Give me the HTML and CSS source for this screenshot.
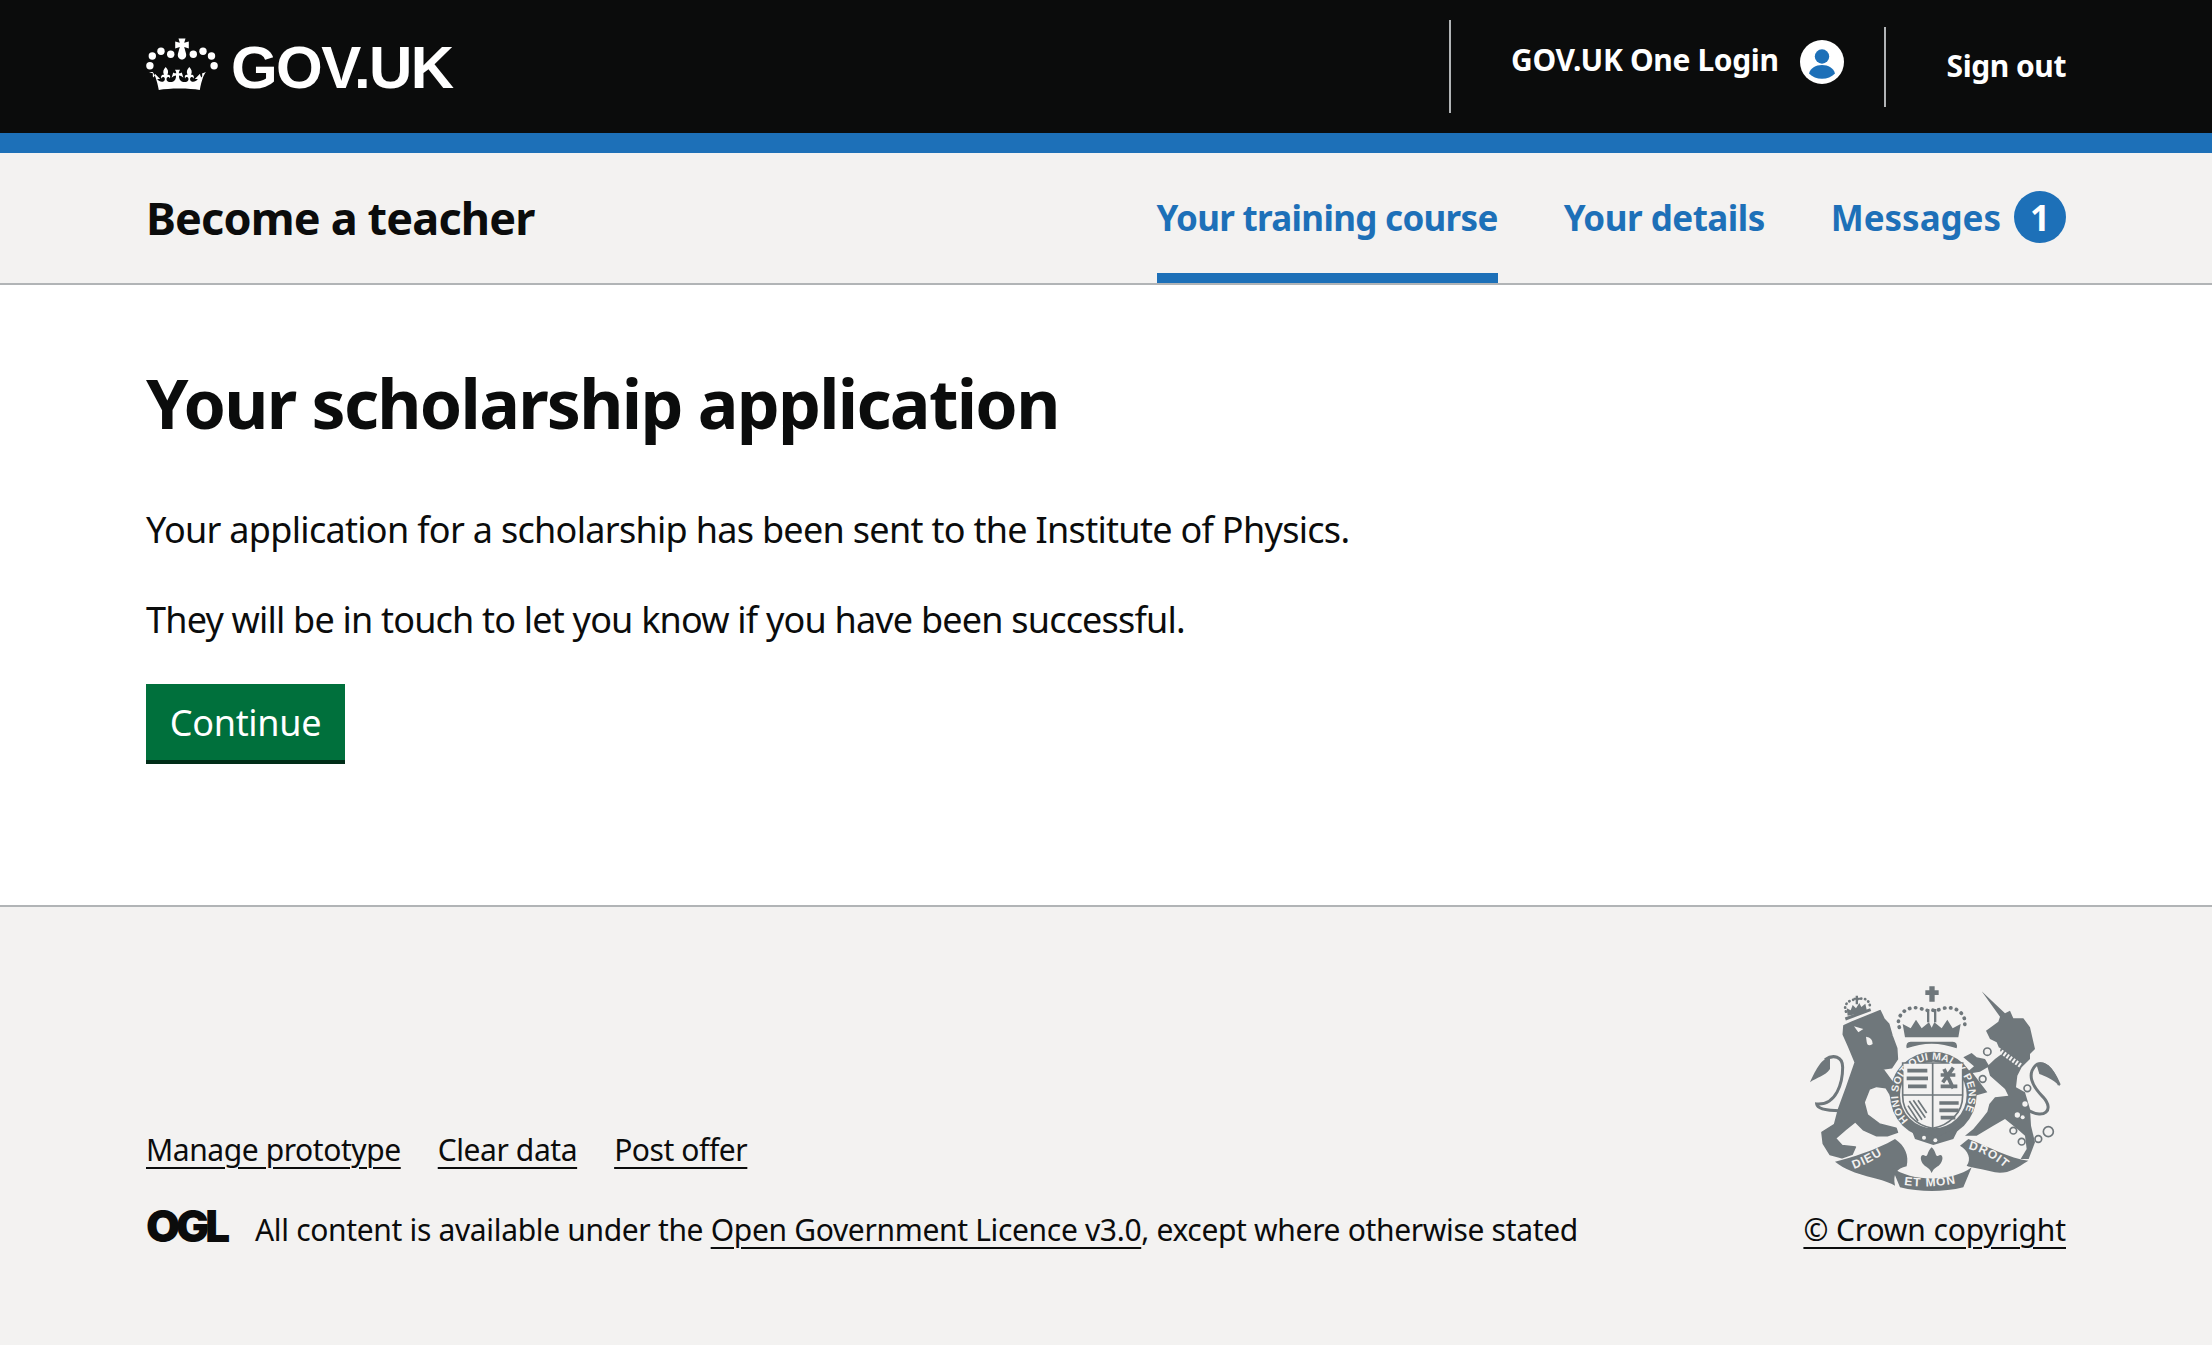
FILE: index.html
```html
<!DOCTYPE html>
<html lang="en">
<head>
<meta charset="utf-8">
<title>Your scholarship application</title>
<link rel="stylesheet" href="styles.css">
</head>
<body>
<header class="top">
  <div class="wrap top-row">
    <a class="brand" href="#">
      <svg class="crown" viewBox="0 0 72 54" aria-hidden="true">
        <g fill="#fff">
          <circle cx="3.900" cy="27.800" r="3.700"/><circle cx="6.300" cy="18" r="3.700"/><circle cx="15" cy="13.200" r="3.700"/><circle cx="24.700" cy="16.300" r="3.700"/>
          <circle cx="47.300" cy="16.300" r="3.700"/><circle cx="57" cy="13.200" r="3.700"/><circle cx="65.500" cy="18" r="3.700"/><circle cx="68.100" cy="27.800" r="3.700"/>
          <path d="M32.500 0.500h7l-1.300 4.300 4.600-1.300v7l-4.600-1.600 1.800 6.600c.9 3.600-1.400 6-4 6s-4.900-2.400-4-6l1.800-6.600-4.600 1.600v-7l4.600 1.300z"/>
          <path d="M3 34l4 1.500c-.4 1.800-.2 3 .2 4 1.100-.8 1.600-2.200 1.800-3.800l5.200 5.400c-1-.2-2-.3-3-.1 1.500 2.600 4.600 3.200 6.200 2.400 2-1 1.800-3.600.5-4.200-1.200-.4-2 .3-2.200 1.400-1.300-2.200-.2-4.200 2.300-3.900-1.400-2.700-.8-5 1.700-7.600 2.500 2.600 3.100 4.900 1.700 7.600 2.100-.4 3.200 1 2.700 3l-.2.8c-.3-1-1.200-1.600-2.400-1.300-1.400.6-1.400 3.200.3 4.200 2.200 1.300 6.200.7 7.600-2.200.6-1.200.7-2.400.6-3.600-1.300.2-2.800.6-4.400 2.200l1.600-5.400c1.100.6 2.300.8 3.100.8-.1-1.300-.6-2.400-1.400-3.400l5.200-.1c-.7 1-1.200 2.100-1.400 3.500.9 0 2-.2 3.100-.8l1.600 5.400c-1.600-1.600-3.100-2-4.400-2.200-.1 1.200 0 2.400.6 3.600 1.400 2.900 5.400 3.500 7.600 2.200 1.700-1 1.700-3.600.3-4.200-1.200-.3-2.100.3-2.400 1.300l-.2-.8c-.5-2 .6-3.400 2.700-3-1.400-2.700-.8-5 1.700-7.600 2.500 2.600 3.100 4.900 1.700 7.600 2.500-.3 3.600 1.700 2.300 3.900-.2-1.100-1-1.800-2.200-1.400-1.300.6-1.500 3.200.5 4.200 1.600.8 4.700.2 6.200-2.400-1-.2-2-.1-3 .1l5.200-5.400c.2 1.600.7 3 1.800 3.800.4-1 .6-2.200.2-4l4-1.500c-2.200 2.600-4.200 7.500-6.200 18-5.500-1-12-1.500-20.400-1.500s-15 .5-20.600 1.500c-2-10.500-4-15.400-6.200-18z"/>
        </g>
      </svg>
      <span class="wordmark">GOV.UK</span>
    </a>
    <nav class="top-nav">
      <a class="login" href="#">
        <span class="login-text">GOV.UK One Login</span>
        <svg class="person" viewBox="0 0 44 44" aria-hidden="true">
          <circle cx="22" cy="22" r="22" fill="#fff"/>
          <circle cx="22" cy="16.500" r="7.200" fill="#1d70b8"/>
          <path d="M9 33.500c1.500-5.500 6.500-8.500 13-8.500s11.500 3 13 8.500c-3.300 3.300-8 5.300-13 5.300s-9.700-2-13-5.300z" fill="#1d70b8"/>
        </svg>
      </a>
      <a class="signout" href="#">Sign out</a>
    </nav>
  </div>
</header>
<div class="service">
  <div class="wrap service-row">
    <a class="service-name" href="#">Become a teacher</a>
    <nav class="tabs">
      <a class="tab tab-active" href="#">Your training course</a>
      <a class="tab" href="#">Your details</a>
      <a class="tab tab-messages" href="#">Messages<span class="badge">1</span></a>
    </nav>
  </div>
</div>
<main class="wrap main">
  <h1 class="title">Your scholarship application</h1>
  <p class="body-text">Your application for a scholarship has been sent to the Institute of Physics.</p>
  <p class="body-text body-text-tight">They will be in touch to let you know if you have been successful.</p>
  <a class="button" href="#">Continue</a>
</main>
<footer class="foot">
  <div class="wrap foot-row">
    <div class="foot-left">
      <ul class="foot-links">
        <li><a href="#">Manage prototype</a></li>
        <li><a href="#">Clear data</a></li>
        <li><a href="#">Post offer</a></li>
      </ul>
      <div class="licence">
        <span class="ogl">OGL</span>
        <span>All content is available under the <a href="#">Open Government Licence v3.0</a>, except where otherwise stated</span>
      </div>
    </div>
    <div class="foot-right">
      <svg class="arms" viewBox="0 0 900 690" aria-hidden="true">
        <defs>
          <path id="garterArc" d="M385 453A106 106 0 1 1 521 465"/>
          <path id="dieuArc" d="M222 600Q275 580 330 542"/>
          <path id="monArc" d="M372 648Q455 660 540 640"/>
          <path id="droitArc" d="M565 540Q630 555 685 607"/>
        </defs>
        <g class="arms-fill">
          <!-- lion -->
          <path class="arms-round" d="M192 170L215 160 300 125 312 150 326 165 336 200 350 238 352 270 335 296 308 300 345 350 360 385 340 408 330 375 318 356 290 352 268 360 252 400 262 438 298 465 348 478 352 490 322 500 290 500 250 482 226 458 196 482 166 508 186 530 226 534 216 556 186 566 150 556 130 524 126 490 164 466 176 420 200 355 226 280 206 232 190 196Z"/>
          <path class="arms-bg-fill" d="M222 172L250 180 235 190ZM258 203Q278 205 278 225 262 235 260 218Z"/>
          <path d="M150 265C120 270 105 310 90 340 110 325 135 322 150 300Z"/>
          <path class="arms-line" d="M180 425C140 425 112 420 110 405 170 410 188 340 188 295 188 262 160 255 135 272"/>
          <!-- lion's crown -->
          <path class="arms-band" d="M196 150L272 122"/>
          <path d="M203 140L200 118 212 124 218 108 228 118 238 102 244 114 256 104 260 122 264 128Z"/>
          <path class="arms-dash-small" d="M198 128C188 105 210 90 230 92 250 84 272 90 270 120"/>
          <path d="M227 80h7v6h6v6h-6v14h-7v-14h-6v-6h6z"/>
          <!-- crown -->
          <path d="M375 205L368 165 392 178 408 152 425 178 447 160 455 176 463 160 485 178 502 152 518 178 542 165 535 205Z"/>
          <path d="M380 238Q376 218 392 218H518Q534 218 530 238Q455 210 380 238Z"/>
          <path d="M448 52h16v12h12v14h-12v20h-16v-20h-12v-14h12z"/>
          <rect x="441" y="120" width="7" height="40"/><rect x="462" y="120" width="7" height="40"/>
          <path class="arms-dash" d="M358 175C345 140 380 108 420 118 435 122 443 128 455 122 467 128 475 122 490 118 530 108 565 140 552 175"/>
          <!-- garter -->
          <circle cx="460" cy="378" r="130"/>
          <path d="M390 470L470 505 540 470 520 510 460 528 405 510Z"/>
          <circle class="arms-bg-fill" cx="432" cy="506" r="6"/><circle class="arms-bg-fill" cx="466" cy="514" r="6"/>
          <circle class="arms-bg-fill" cx="460" cy="378" r="100"/>
          <!-- shield -->
          <path class="arms-shield" d="M368 282H548V380C548 430 510 468 458 478 405 468 368 430 368 380Z"/>
          <path class="arms-cross" d="M458 282V478M368 378H548"/>
          <g class="arms-charges">
            <path d="M382 305H442M380 328H444M384 352H440"/>
            <path d="M482 318L526 318M492 300L520 358M482 352L532 352M520 296L488 340"/>
            <path class="arms-thin" d="M388 396L426 452M400 394L436 446M384 410L414 456M414 394L440 432"/>
            <path d="M478 402H536M478 424H536M482 446H526"/>
          </g>
          <!-- unicorn -->
          <g transform="translate(450 30)">
            <path d="M155 37L225 103 240 95 250 118 280 118 300 145 315 210 300 225 300 240 275 265 262 290 258 325 285 340 300 390 303 440 315 490 296 540 272 540 290 510 285 470 262 450 225 420 190 440 140 470 105 470 130 450 155 420 172 398 178 375 195 355 235 350 225 330 180 290 172 262 195 240 215 225 200 190 180 180 168 155 205 128 210 113Z"/>
            <path d="M100 235L125 222 140 235 165 240 178 262 150 278 128 282 172 340 135 350 105 285 132 262Z"/>
            <path class="arms-collar" d="M195 205L275 262"/>
            <path class="arms-line" d="M298 395C340 420 375 395 340 355 305 320 290 285 318 258 340 245 365 265 388 318"/>
            <path d="M318 252C345 242 375 265 390 322 365 298 345 292 328 285Z"/>
            <g class="arms-rings">
              <circle cx="250" cy="455" r="10"/><circle cx="275" cy="488" r="10"/><circle cx="325" cy="480" r="10"/><circle cx="355" cy="458" r="15"/>
              <circle cx="292" cy="328" r="10"/><circle cx="158" cy="300" r="10"/><circle cx="172" cy="218" r="11"/>
            </g>
            <circle class="arms-bg-fill" cx="285" cy="375" r="8"/><circle class="arms-bg-fill" cx="262" cy="408" r="8"/><circle class="arms-bg-fill" cx="278" cy="415" r="6"/>
          </g>
          <!-- ribbons -->
          <path d="M165 578C215 565 285 545 345 510 375 530 388 560 380 592 350 598 338 615 345 650 300 622 225 625 165 578Z"/>
          <path d="M335 595C395 640 515 640 575 595L550 655C490 670 420 670 360 655Z"/>
          <path d="M540 530L565 510C620 530 690 570 745 575 705 600 685 615 645 610 610 600 570 595 560 590 575 570 565 545 540 530Z"/>
          <path d="M455 535C470 548 465 565 475 560 490 552 492 575 478 588 470 596 462 596 455 612 448 596 440 596 432 588 418 575 420 552 435 560 445 565 440 548 455 535Z"/>
        </g>
        <g class="arms-text">
          <text class="arms-garter"><textPath href="#garterArc">HONI SOIT QUI MAL Y PENSE</textPath></text>
          <text class="arms-motto"><textPath href="#dieuArc">DIEU</textPath></text>
          <text class="arms-motto"><textPath href="#monArc">ET MON</textPath></text>
          <text class="arms-motto"><textPath href="#droitArc">DROIT</textPath></text>
        </g>
      </svg>
      <a class="copyright" href="#">© Crown copyright</a>
    </div>
  </div>
</footer>
</body>
</html>
```

FILE: styles.css
```css
* { box-sizing: border-box; }
html, body { margin: 0; padding: 0; }
body {
  font-family: "Noto Sans", sans-serif;
  color: #0b0c0c;
  background: #fff;
}
a { color: inherit; }
.wrap { width: 1920px; margin: 0 auto; }

.top { background: #0b0c0c; border-bottom: 20px solid #1d70b8; height: 153px; }
.top-row { display: flex; justify-content: space-between; height: 133px; }
.brand { display: flex; align-items: flex-start; text-decoration: none; color: #fff; }
.crown { width: 72px; height: 54px; margin-top: 38px; }
.wordmark {
  font: 700 60px/66px "Liberation Sans", sans-serif;
  margin: 35px 0 0 13px;
  letter-spacing: -1.6px;
}
.top-nav { display: flex; align-items: center; color: #fff; font-weight: 700; font-size: 30px; }
.top-nav a { text-decoration: none; }
.login {
  display: flex; align-items: center; height: 93px; padding-left: 60px;
  border-left: 2px solid #b1b4b6;
}
.login-text { margin-bottom: 14px; letter-spacing: -.36px; }
.person { width: 44px; height: 44px; margin-left: 21px; margin-bottom: 9px; }
.signout {
  margin-left: 40px; padding-left: 61px; height: 80px; line-height: 78px;
  border-left: 2px solid #b1b4b6; letter-spacing: -.45px;
}

.service { background: #f3f2f1; border-bottom: 2px solid #b1b4b6; height: 132px; }
.service-row { display: flex; justify-content: space-between; height: 130px; }
.service-name { font-weight: 700; font-size: 45px; line-height: 130px; text-decoration: none; letter-spacing: -.85px; }
.tabs { display: flex; gap: 66px; color: #1d70b8; font-weight: 700; font-size: 35px; }
.tab { display: flex; align-items: center; height: 130px; padding-top: 8px; text-decoration: none; border-bottom: 10px solid transparent; letter-spacing: -.5px; }
.tab-active { border-bottom-color: #1d70b8; letter-spacing: -.7px; }
.tab-messages { letter-spacing: -.05px; }
.badge {
  display: flex; align-items: center; justify-content: center;
  width: 52px; height: 52px; margin-left: 13px;
  border-radius: 50%; background: #1d70b8; color: #fff; letter-spacing: 0;
}

.main { height: 620px; padding-top: 73px; }
.title { margin: 0 0 54px; font-size: 68px; line-height: 90px; font-weight: 700; letter-spacing: -1.7px; }
.body-text { margin: 0 0 34px; font-size: 36px; line-height: 56px; letter-spacing: -.7px; }
.body-text-tight { letter-spacing: -.8px; margin-bottom: 35px; }
.button {
  display: inline-block; width: 199px; height: 76px; margin-top: 1px;
  background: #00703c; box-shadow: 0 4px 0 #002d18;
  color: #fff; font-size: 36px; line-height: 78px; text-align: center; text-decoration: none; letter-spacing: -.3px;
}

.foot { background: #f3f2f1; border-top: 2px solid #b1b4b6; height: 440px; }
.foot-row { display: flex; justify-content: space-between; align-items: flex-end; height: 347px; }
.foot-links { display: flex; gap: 37px; list-style: none; margin: 0 0 32px; padding: 0; font-size: 30px; line-height: 48px; letter-spacing: -.42px; }
.foot-links a, .licence a, .copyright { text-decoration-thickness: 2px; text-underline-offset: 6px; }
.licence { display: flex; align-items: center; gap: 27px; font-size: 30px; line-height: 48px; letter-spacing: -.33px; }
.ogl { font: 900 44px/41px Inter, sans-serif; letter-spacing: -4px; width: 82px; flex: none; margin-bottom: 7px; }
.foot-right { display: flex; flex-direction: column; align-items: flex-end; }
.arms { display: block; width: 300px; height: 230px; margin: 0 -14px 7px 0; }
.copyright { font-size: 30px; line-height: 48px; letter-spacing: -.12px; }

.arms-fill { fill: #6f777b; }
.arms-round { stroke: #6f777b; stroke-width: 5; stroke-linejoin: round; }
.arms-line { fill: none; stroke: #6f777b; stroke-width: 9; }
.arms-band { fill: none; stroke: #6f777b; stroke-width: 9; }
.arms-dash { fill: none; stroke: #6f777b; stroke-width: 11; stroke-dasharray: 1 17; stroke-linecap: round; }
.arms-dash-small { fill: none; stroke: #6f777b; stroke-width: 8; stroke-dasharray: 1 11; stroke-linecap: round; }
.arms-bg-fill { fill: #f3f2f1; }
.arms-collar { fill: none; stroke: #f3f2f1; stroke-width: 14; stroke-dasharray: 6 5; }
.arms-shield { fill: #f3f2f1; stroke: #6f777b; stroke-width: 5; }
.arms-cross { fill: none; stroke: #6f777b; stroke-width: 5; }
.arms-charges { fill: none; stroke: #6f777b; stroke-width: 11; }
.arms-thin { stroke-width: 5; }
.arms-rings { fill: none; stroke: #6f777b; stroke-width: 5; }
.arms-text { fill: #f3f2f1; font-family: "Liberation Sans", sans-serif; font-weight: 700; }
.arms-garter { font-size: 31px; letter-spacing: 1px; }
.arms-motto { font-size: 36px; letter-spacing: 3px; }
```
